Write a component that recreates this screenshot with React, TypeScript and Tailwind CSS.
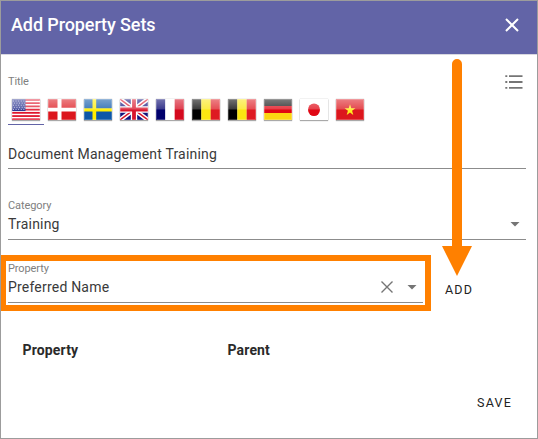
import type { ReactNode } from "react";

const star = "14,5 15.3,8.9 19.4,8.9 16.1,11.3 17.3,15.2 14,12.8 10.7,15.2 11.9,11.3 8.6,8.9 12.7,8.9";

function Stripes({ colors, vertical }: { colors: string[]; vertical?: boolean }) {
  return (
    <>
      {colors.map((c, i) =>
        vertical ? (
          <rect key={i} x={(i * 28) / 3} width={28 / 3 + 0.1} height="20" fill={c} />
        ) : (
          <rect key={i} y={(i * 20) / 3} width="28" height={20 / 3 + 0.1} fill={c} />
        ),
      )}
    </>
  );
}

const belgium = <Stripes vertical colors={["#000", "#fbe611", "#de1a22"]} />;

const flags: { id: string; art: ReactNode }[] = [
  {
    id: "us",
    art: (
      <>
        <rect width="28" height="20" fill="#fff" />
        {[0, 1, 2, 3, 4, 5, 6].map((i) => (
          <rect key={i} y={i * 3.08} width="28" height="1.7" fill="#e0142c" />
        ))}
        <rect width="13.5" height="11.5" fill="#2b3590" />
        {[1.5, 3.5, 5.5, 7.5, 9.5].map((y, r) =>
          [0, 1, 2, 3, 4].map((c) => (
            <rect key={`${r}${c}`} x={1 + c * 2.6 + (r % 2) * 0.9} y={y} width="0.9" height="0.9" fill="#c9cbea" />
          )),
        )}
      </>
    ),
  },
  {
    id: "dk",
    art: (
      <>
        <rect width="28" height="20" fill="#dc161d" />
        <path d="M9.5 0h4v20h-4zM0 8.4h28v3.4H0z" fill="#fff" />
      </>
    ),
  },
  {
    id: "se",
    art: (
      <>
        <rect width="28" height="20" fill="#0c57a8" />
        <path d="M8.5 0h3.7v20H8.5zM0 8.8h28v3H0z" fill="#ffee00" />
      </>
    ),
  },
  {
    id: "gb",
    art: (
      <>
        <rect width="28" height="20" fill="#12127c" />
        <path d="M0 0l28 20M28 0L0 20" stroke="#fff" strokeWidth="4.4" />
        <path d="M0 0l28 20M28 0L0 20" stroke="#d9182c" strokeWidth="1.4" />
        <path d="M14 0v20M0 10h28" stroke="#fff" strokeWidth="6.4" />
        <path d="M14 0v20M0 10h28" stroke="#d9142c" strokeWidth="3.8" />
      </>
    ),
  },
  { id: "fr", art: <Stripes vertical colors={["#00006c", "#fff", "#d4091e"]} /> },
  { id: "be-nl", art: belgium },
  { id: "be-fr", art: belgium },
  { id: "de", art: <Stripes colors={["#111", "#e00512", "#fbd512"]} /> },
  {
    id: "jp",
    art: (
      <>
        <rect width="28" height="20" fill="#fff" />
        <circle cx="14" cy="10.3" r="6" fill="#e00714" />
      </>
    ),
  },
  {
    id: "vn",
    art: (
      <>
        <rect width="28" height="20" fill="#dc161d" />
        <polygon points={star} fill="#ffee20" />
      </>
    ),
  },
];

function Flag({ art }: { art: ReactNode }) {
  return (
    <svg width="28" height="21" viewBox="0 0 28 20" preserveAspectRatio="none" className="-ml-px shadow-[0_1px_1px_rgba(0,0,0,0.3),0_0_1px_rgba(0,0,0,0.3)]">
      <defs>
        <linearGradient id="gloss" x1="0" y1="0" x2="0" y2="1">
          <stop offset="0" stopColor="#fff" stopOpacity="0.45" />
          <stop offset="1" stopColor="#fff" stopOpacity="0.22" />
        </linearGradient>
      </defs>
      {art}
      <rect width="28" height="10" fill="url(#gloss)" />
      <rect x="0.5" y="0.5" width="27" height="19" fill="none" stroke="#fff" strokeOpacity="0.22" />
    </svg>
  );
}

function Caret() {
  return (
    <svg width="10" height="5" viewBox="0 0 10 5" className="fill-[#757575]">
      <path d="M0.5 0h9L5 4.5z" />
    </svg>
  );
}

export default function App() {
  return (
    <div className="relative h-[439px] w-[538px] overflow-hidden border border-[#9c9c9c] bg-white text-[14px] leading-5 text-[#3a3a3a]" style={{ fontFamily: "Roboto, sans-serif" }}>
      <header className="flex h-[54px] items-center justify-between border-b border-[#d8d8e0] bg-[#6264a7] pr-[18px] pl-2.5 text-white">
        <h1 className="pb-[5px] text-[18px] leading-6 font-medium tracking-[-0.1px]">Add Property Sets</h1>
        <svg width="14" height="14" viewBox="0 0 14 14" className="mb-[5px] stroke-white stroke-[2]">
          <path d="M1 1l12 12M13 1L1 13" />
        </svg>
      </header>

      <main className="pr-[11px] pl-[7px]">
        <section className="flex h-[114px] flex-col border-b border-[#8c8c8c]">
          <div className="flex h-[33px] items-end justify-between">
            <span className="mb-[-1px] text-[11px] leading-[14px] tracking-[-0.1px] text-[#808080]">Title</span>
            <svg width="18" height="14" viewBox="0 0 18 14" className="mr-[3px] mb-[-1px] fill-[#757575]">
              <path d="M0.3 0.3h2v1.7h-2zM4 0.3h13.5V2H4zM0.3 6h2v2h-2zM4 6h13.5v2H4zM0.3 12h2v1.7h-2zM4 12h13.5v1.7H4z" />
            </svg>
          </div>
          <div className="flex h-[37px]">
            {flags.map((f, i) => (
              <div key={f.id} className={`flex w-9 justify-center border-b pt-[11px] ${i === 0 ? "border-[#6264a7]" : "border-transparent"}`}>
                <Flag art={f.art} />
              </div>
            ))}
          </div>
          <div className="pt-[19px] tracking-[0.2px]">Document Management Training</div>
        </section>

        <section className="h-[71px] border-b border-[#8c8c8c] pt-[30px]">
          <div className="text-[11px] leading-[14px] tracking-[-0.1px] text-[#808080]">Category</div>
          <div className="mt-px flex items-center justify-between pr-1.5 tracking-[0.2px]">
            Training
            <Caret />
          </div>
        </section>

        <section className="flex h-[63px] pt-[22px]">
          <div className="w-[415px] border-b border-[#8c8c8c]">
            <div className="text-[11px] leading-[14px] tracking-[-0.1px] text-[#808080]">Property</div>
            <div className="mt-px flex items-center tracking-[0.2px]">
              <span className="flex-1">Preferred Name</span>
              <svg width="12" height="12" viewBox="0 0 12 12" className="mr-[14px] stroke-[#757575] stroke-[1.4]">
                <path d="M0.5 0.5l11 11M11.5 0.5l-11 11" />
              </svg>
              <span className="mr-1.5 flex">
                <Caret />
              </span>
            </div>
          </div>
          <button className="mt-[18px] ml-[22px] h-5 text-[12.5px] tracking-[1.2px] text-[#222]">ADD</button>
        </section>

        <div className="mt-[37px] flex pl-[14.5px] font-bold tracking-[0.15px] text-[#2a2a2a]">
          <span className="w-[205px]">Property</span>
          <span>Parent</span>
        </div>

        <div className="mt-[33px] flex justify-end pr-[14px]">
          <button className="text-[12.5px] tracking-[1.2px] text-[#222]">SAVE</button>
        </div>
      </main>

      <div className="absolute top-[254px] -left-px h-14 w-[431px] border-6 border-[#ff8000]" />
      <svg width="30" height="217" viewBox="0 0 30 217" className="absolute top-[58px] left-[441px] fill-[#ff8000]">
        <path d="M10 5a5 5 0 0 1 10 0v182h10L15 217L0 187h10z" />
      </svg>
    </div>
  );
}
